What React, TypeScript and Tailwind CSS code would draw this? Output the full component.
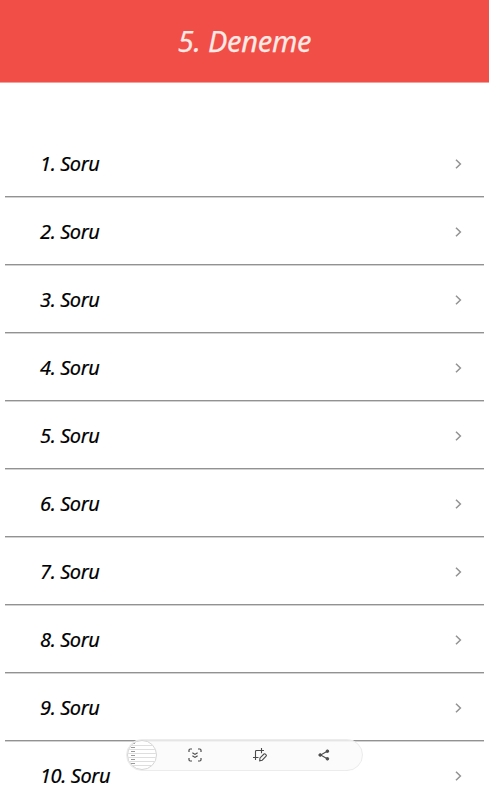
import React from 'react';

const questions = [1, 2, 3, 4, 5, 6, 7, 8, 9, 10];

function ScrollCaptureIcon() {
    return (
        <svg width="14" height="14" viewBox="0 0 14 14" fill="none" stroke="#4b4b4b" strokeWidth="1.2">
            <path d="M1 4V2.2Q1 1 2.2 1H4M10 1h1.8Q13 1 13 2.2V4M13 10v1.8q0 1.2-1.2 1.2H10M4 13H2.2Q1 13 1 11.8V10" />
            <path d="M4.4 4.7 7 6.4l2.6-1.7M4.4 7.7 7 9.4l2.6-1.7" />
        </svg>
    );
}

function CropEditIcon() {
    return (
        <svg width="16" height="16" viewBox="0 0 16 16" fill="none" stroke="#4b4b4b" strokeWidth="1.1">
            <path d="M3.5 13V4.4Q3.5 3.5 4.4 3.5H12M9.5 1v5.2M1 10.5h5.5" />
            <path d="m7.7 13.8.3-2.9 4-3.9q.7-.6 1.4.1l.7.7q.7.7 0 1.4l-3.9 4z" />
        </svg>
    );
}

function ShareIcon() {
    return (
        <svg width="12" height="12" viewBox="0 0 12 12" fill="#4b4b4b" stroke="#4b4b4b">
            <path d="M9.3 2.2 2.6 6l6.7 3.8" fill="none" strokeWidth="1.1" />
            <circle cx="9.4" cy="2.2" r="1.3" />
            <circle cx="2.2" cy="6" r="1.3" />
            <circle cx="9.4" cy="9.8" r="1.3" />
        </svg>
    );
}

export default function App() {
    return (
        <div className="relative h-[800px] w-[489px] overflow-hidden bg-white font-['Noto_Sans',sans-serif] italic">
            <header className="flex h-[83px] items-center justify-center border-b border-[#f4a09b] bg-[#f04e47] pb-0.5">
                <h1 className="text-[29px] leading-none tracking-[-0.25px] text-[#ffe9e5] [-webkit-text-stroke:0.25px_#ffe9e5]">5. Deneme</h1>
            </header>

            {/* Question list */}
            <ul className="px-[5px] pt-[47px]">
                {questions.map((n) => (
                    <li key={n} className="h-[68px] border-b border-[#d2d2d2]">
                        <div className="flex h-[67px] items-center justify-between border-b border-[#929292] pt-0.5 pr-[21px] pl-[35px]">
                            <span className="text-[20px] leading-none tracking-[-0.4px] text-black [-webkit-text-stroke:0.2px_black]">{n}. Soru</span>
                            <svg width="9" height="10" viewBox="0 0 9 10" fill="none" stroke="#939393" strokeWidth="1.5">
                                <path d="m2 .7 4.4 4.3L2 9.3" />
                            </svg>
                        </div>
                    </li>
                ))}
            </ul>

            {/* Screenshot toolbar */}
            <div className="absolute top-[739px] left-[126px] flex h-[32px] w-[237px] items-center rounded-full border border-[#ececec] bg-[#fafafa]/80">
                <div className="h-[30px] w-[30px] overflow-hidden rounded-full border border-[#d6d6d6] bg-white pt-px">
                    {[0, 1, 2, 3, 4, 5, 6].map((i) => (
                        <div key={i} className="flex h-[4px] items-center border-b border-[#dedede] pl-[3px]">
                            <span className="h-px w-[4px] bg-[#999999]" />
                        </div>
                    ))}
                </div>
                <div className="flex grow items-center justify-between pr-8 pl-[31px]">
                    <ScrollCaptureIcon />
                    <CropEditIcon />
                    <ShareIcon />
                </div>
            </div>
        </div>
    );
}
